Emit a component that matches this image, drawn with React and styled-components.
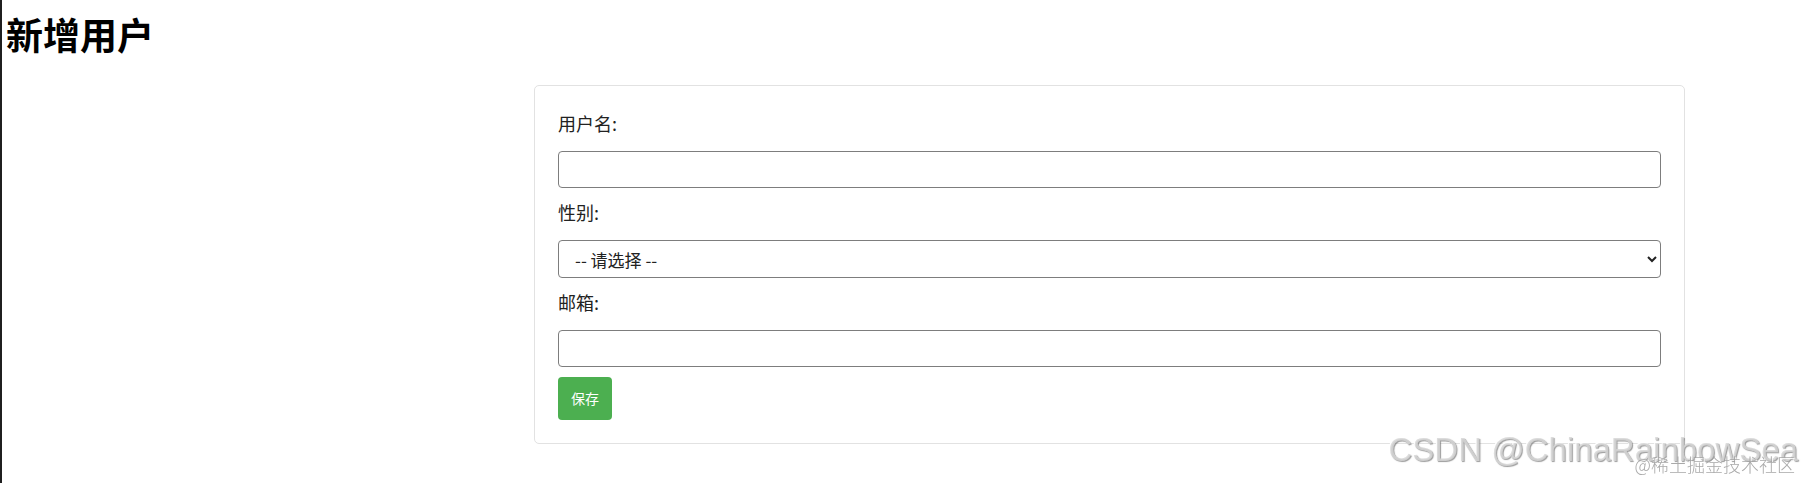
import styled, { createGlobalStyle } from "styled-components";

const GlobalStyle = createGlobalStyle`
  * {
    box-sizing: border-box;
  }

  body {
    margin: 0;
    background: #fff;
    color: #212121;
    font-family: "Noto Sans CJK SC", "Noto Sans", sans-serif;
    overflow: hidden;
  }
`;

export default function App() {
  return (
    <>
      <GlobalStyle />
      <StyledPage>
        <StyledHeading>新增用户</StyledHeading>
        <StyledCard>
          <StyledForm onSubmit={(e) => e.preventDefault()}>
            <StyledLabel htmlFor="username">用户名:</StyledLabel>
            <StyledInput id="username" type="text" />

            <StyledLabel htmlFor="gender">性别:</StyledLabel>
            <StyledSelect id="gender" defaultValue="">
              <option value="">-- 请选择 --</option>
              <option value="male">男</option>
              <option value="female">女</option>
            </StyledSelect>

            <StyledLabel htmlFor="email">邮箱:</StyledLabel>
            <StyledInput id="email" type="email" />

            <StyledButton type="submit">保存</StyledButton>
          </StyledForm>
        </StyledCard>
      </StyledPage>
      <StyledWatermark>
        <StyledWatermarkMain>CSDN @ChinaRainbowSea</StyledWatermarkMain>
        <StyledWatermarkSub>@稀土掘金技术社区</StyledWatermarkSub>
      </StyledWatermark>
    </>
  );
}

const StyledPage = styled.main`
  min-height: 100vh;
  border-left: 2px solid #1f1f1f;
  padding: 14px 0 0 4px;
`;

const StyledHeading = styled.h1`
  margin: 0 0 31px;
  font-size: 37px;
  line-height: 40px;
  font-weight: 700;
  color: #000;
`;

const StyledCard = styled.section`
  width: 1151px;
  margin-left: 528px;
  padding: 23px;
  border: 1px solid #e2e2e2;
  border-radius: 5px;
  background: #fff;
`;

const StyledForm = styled.form`
  display: flex;
  flex-direction: column;
  align-items: stretch;
`;

const StyledLabel = styled.label`
  display: block;
  font-size: 18px;
  line-height: 28px;
  margin-bottom: 14px;
  color: #222;
`;

const StyledInput = styled.input`
  display: block;
  width: 100%;
  height: 37px;
  margin: 0 0 10px;
  padding: 0 10px;
  border: 1px solid #7d7d7d;
  border-radius: 4px;
  font: inherit;
  font-size: 17px;
  background: #fff;
`;

const StyledSelect = styled.select`
  display: block;
  width: 100%;
  height: 38px;
  margin: 0 0 10px;
  padding: 0 12px;
  border: 1px solid #7d7d7d;
  border-radius: 4px;
  font-family: inherit;
  font-size: 17px;
  color: #222;
  background: #fff;
`;

const StyledButton = styled.button`
  align-self: flex-start;
  padding: 11px 13px;
  border: none;
  border-radius: 4px;
  background: #4caf50;
  color: #fff;
  font-family: inherit;
  font-size: 14px;
  line-height: 21px;
  cursor: pointer;
`;

const StyledWatermark = styled.div`
  position: fixed;
  right: 5px;
  bottom: 8px;
  display: flex;
  flex-direction: column;
  align-items: flex-end;
  pointer-events: none;
`;

const StyledWatermarkMain = styled.span`
  font-family: "Liberation Sans", Arial, sans-serif;
  font-size: 33px;
  line-height: 30px;
  color: rgba(215, 215, 215, 0.85);
  text-shadow: 1px 1px 1px rgba(90, 90, 90, 0.6), -1px -1px 0 #fff;
`;

const StyledWatermarkSub = styled.span`
  margin: -12px 3px 0 0;
  font-family: "Noto Sans CJK SC", sans-serif;
  font-weight: 300;
  font-size: 18px;
  line-height: 22px;
  color: rgba(160, 160, 160, 0.9);
  text-shadow: 1px 1px 0 #fff;
`;
